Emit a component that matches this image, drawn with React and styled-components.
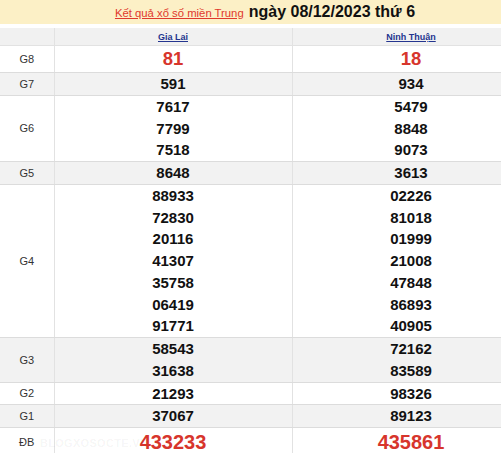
import React from 'react';
import styled, { createGlobalStyle } from 'styled-components';

const GlobalStyle = createGlobalStyle`
  html, body {
    margin: 0;
    padding: 0;
    background: #fff;
    overflow: hidden;
  }
  body {
    font-family: Arial, "Liberation Sans", sans-serif;
  }
`;

const Wrapper = styled.div`
  width: 530px;
  position: relative;
`;

const TitleBar = styled.div`
  height: 24px;
  background-color: #fcf0c6;
  display: flex;
  align-items: center;
  justify-content: center;
  margin-bottom: 4px;
  white-space: nowrap;

  a {
    color: #e0392d;
    font-size: 11.3px;
    text-decoration: underline;
    margin-right: 5px;
    position: relative;
    top: 1px;
  }

  span {
    font-size: 16px;
    font-weight: bold;
    color: #111;
  }
`;

const Table = styled.table`
  width: 530px;
  border-collapse: collapse;
  table-layout: fixed;
`;

const HeadCell = styled.th`
  height: 17px;
  padding: 0;
  background-color: #f1f1f1;
  border-right: 1px solid #e2e2e2;
  border-bottom: 1px solid #e2e2e2;
  font-size: 9px;
  font-weight: bold;

  a {
    color: #24358f;
    text-decoration: underline;
  }
`;

const Row = styled.tr`
  background-color: ${p => (p.$shaded ? '#f2f2f2' : '#fff')};
`;

const Label = styled.td`
  padding: 0;
  text-align: center;
  vertical-align: middle;
  font-size: 11px;
  color: #333;
  border-right: 1px solid #e2e2e2;
  border-bottom: 1px solid #dcdcdc;
`;

const Cell = styled.td`
  padding: 0;
  text-align: center;
  vertical-align: middle;
  border-right: 1px solid #e2e2e2;
  border-bottom: 1px solid #dcdcdc;
`;

const Num = styled.div`
  font-weight: bold;
  font-size: ${p => (p.$big ? p.$big : 15)}px;
  line-height: ${p => (p.$lh ? p.$lh : 21.75)}px;
  color: ${p => (p.$big ? '#d7352c' : '#111')};
`;

const Watermark = styled.div`
  position: absolute;
  left: 40px;
  top: 437px;
  font-size: 11px;
  line-height: 12px;
  font-weight: bold;
  color: rgba(0, 0, 0, 0.05);
  letter-spacing: 0.3px;
  pointer-events: none;
`;

const rows = [
  { label: 'G8', a: ['81'], b: ['18'], big: 18.5, lh: 26 },
  { label: 'G7', a: ['591'], b: ['934'] },
  { label: 'G6', a: ['7617', '7799', '7518'], b: ['5479', '8848', '9073'] },
  { label: 'G5', a: ['8648'], b: ['3613'] },
  {
    label: 'G4',
    a: ['88933', '72830', '20116', '41307', '35758', '06419', '91771'],
    b: ['02226', '81018', '01999', '21008', '47848', '86893', '40905'],
  },
  { label: 'G3', a: ['58543', '31638'], b: ['72162', '83589'] },
  { label: 'G2', a: ['21293'], b: ['98326'] },
  { label: 'G1', a: ['37067'], b: ['89123'] },
  { label: 'ĐB', a: ['433233'], b: ['435861'], big: 20, lh: 28 },
];

function App() {
  return (
    <Wrapper>
      <GlobalStyle />
      <TitleBar>
        <a href="#">Kết quả xổ số miền Trung</a>
        <span>ngày 08/12/2023 thứ 6</span>
      </TitleBar>
      <Table>
        <colgroup>
          <col style={{ width: 54 }} />
          <col style={{ width: 238 }} />
          <col style={{ width: 238 }} />
        </colgroup>
        <thead>
          <tr>
            <HeadCell />
            <HeadCell><a href="#">Gia Lai</a></HeadCell>
            <HeadCell><a href="#">Ninh Thuận</a></HeadCell>
          </tr>
        </thead>
        <tbody>
          {rows.map((r, i) => (
            <Row key={r.label} $shaded={i % 2 === 1}>
              <Label>{r.label}</Label>
              <Cell>
                {r.a.map(n => (
                  <Num key={n} $big={r.big} $lh={r.lh}>{n}</Num>
                ))}
              </Cell>
              <Cell>
                {r.b.map(n => (
                  <Num key={n} $big={r.big} $lh={r.lh}>{n}</Num>
                ))}
              </Cell>
            </Row>
          ))}
        </tbody>
      </Table>
      <Watermark>BLOGXOSOCTE.VN</Watermark>
    </Wrapper>
  );
}

export default App;
